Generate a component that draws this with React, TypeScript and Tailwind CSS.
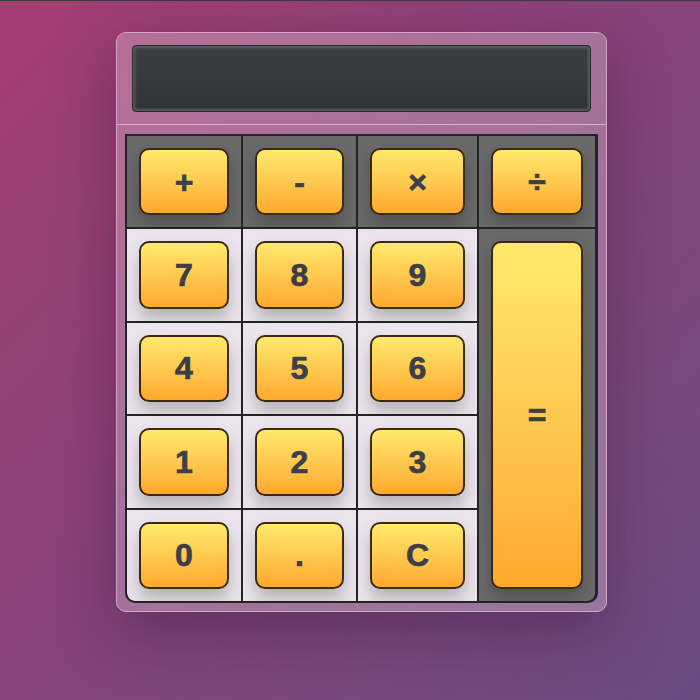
import React from 'react'

type Key = {
  label: string
  dark?: boolean
  tall?: boolean
}

const keys: Key[] = [
  { label: '+', dark: true },
  { label: '-', dark: true },
  { label: '×', dark: true },
  { label: '÷', dark: true },
  { label: '7' },
  { label: '8' },
  { label: '9' },
  { label: '=', dark: true, tall: true },
  { label: '4' },
  { label: '5' },
  { label: '6' },
  { label: '1' },
  { label: '2' },
  { label: '3' },
  { label: '0' },
  { label: '.' },
  { label: 'C' },
]

function CalcKey({ k }: { k: Key }) {
  return (
    <div
      className={`p-3 ${k.dark ? 'bg-[#696969]' : 'bg-[#ebe4ec]'} ${
        k.tall ? 'row-span-4 rounded-br-lg' : ''
      } ${k.label === '0' ? 'rounded-bl-lg' : ''}`}
    >
      <button
        className={`w-full h-full rounded-[10px] border-2 border-[#3b2a12] bg-linear-to-b from-[#ffe96c] to-[#ffa92c] text-[32px] font-bold leading-none text-[#3c3e48] [-webkit-text-stroke:0.7px_#3c3e48] ${
          k.dark
            ? 'shadow-[0_8px_14px_rgba(0,0,0,0.22)]'
            : 'shadow-[0_10px_16px_rgba(0,0,0,0.22)]'
        }`}
        style={{ fontFamily: '"Liberation Sans", Arial, sans-serif' }}
      >
        {k.label}
      </button>
    </div>
  )
}

export default function App() {
  return (
    <div className="min-h-screen w-full border-t border-[#3e3c44] bg-linear-to-br from-[#a43d71] via-[#86437a] to-[#6a4c82] pl-[116px] pt-[31px]">
      <div className="w-[491px] h-[580px] rounded-[10px] border border-[#d8a2c8] bg-white/25 shadow-[0_20px_60px_rgba(40,10,40,0.35)] flex flex-col">
        <div className="h-[92px] px-[15px] pt-[12px] border-b border-[#e2aad2]">
          <div className="h-[67px] rounded-[4px] border border-[#25292a] bg-linear-to-b from-[#3a4042] to-[#2f3335] shadow-[inset_0_0_3px_2px_#59615f]"></div>
        </div>
        <div className="px-[8px] pt-[9px]">
          <div className="grid grid-cols-[114px_113px_119px_116px] grid-rows-[repeat(5,1fr)] gap-[2px] h-[469px] border-2 border-[#242424] rounded-b-[10px] bg-[#242424] overflow-hidden">
            {keys.map((k) => (
              <CalcKey key={k.label} k={k} />
            ))}
          </div>
        </div>
      </div>
    </div>
  )
}
